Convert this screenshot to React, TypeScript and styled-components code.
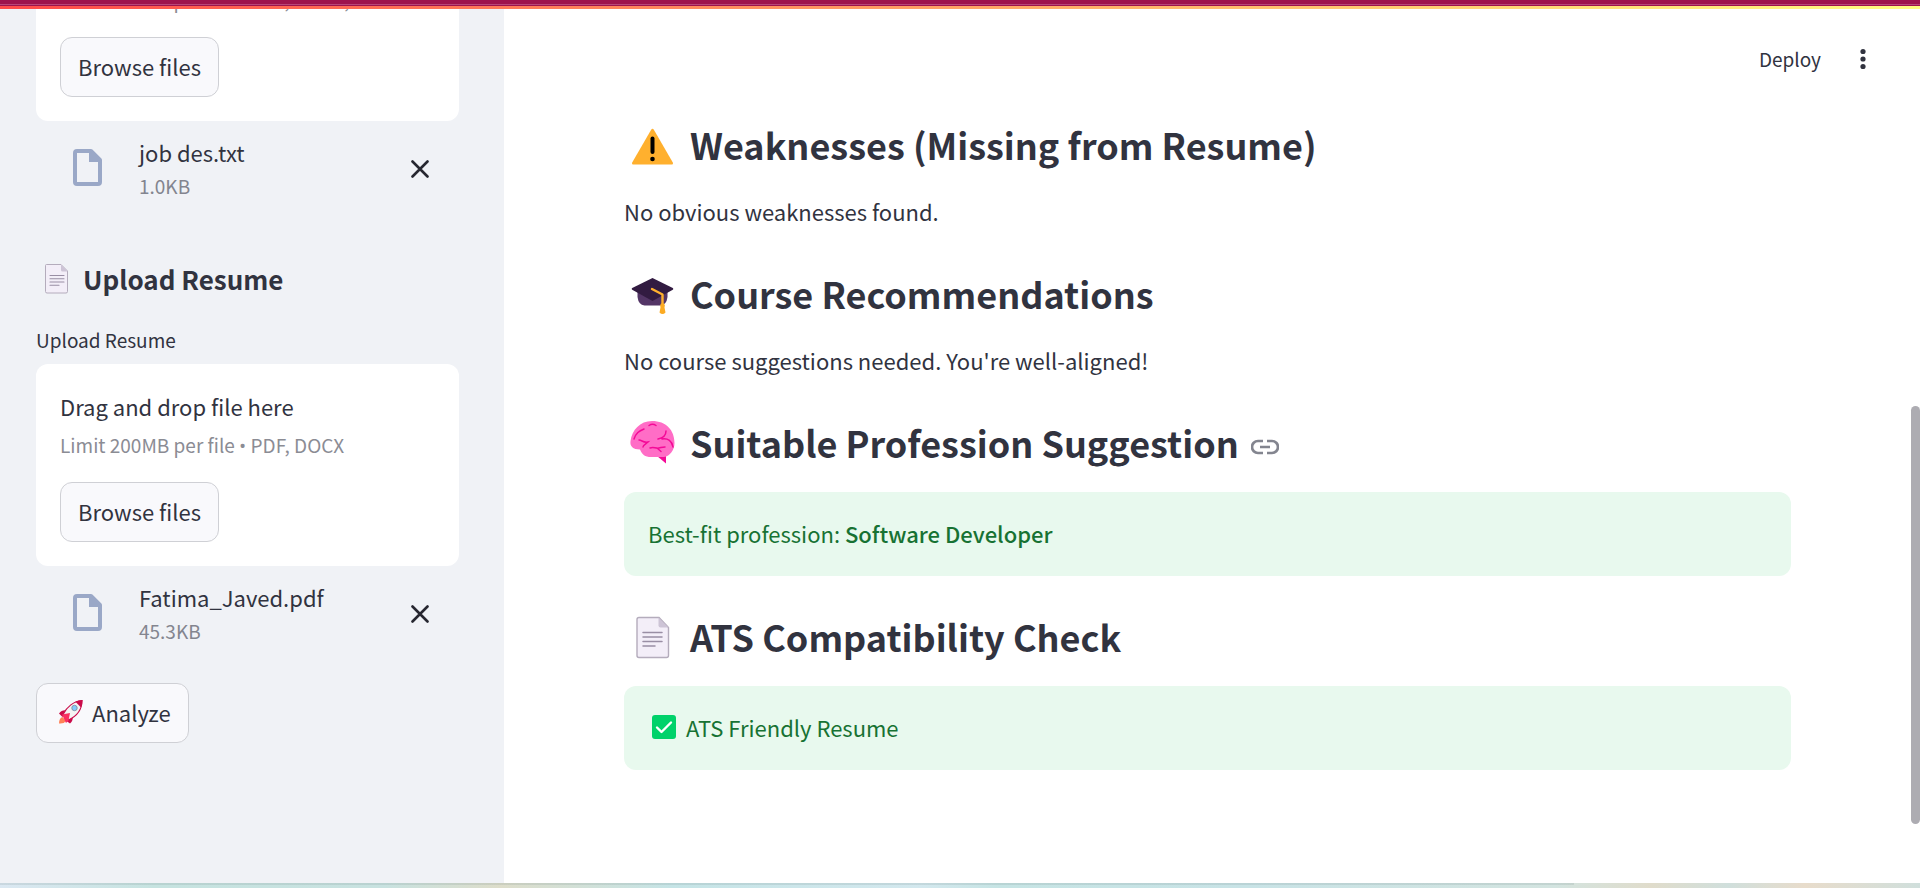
import React, { useId } from 'react';
import styled, { createGlobalStyle } from 'styled-components';

const GlobalStyle = createGlobalStyle`
  *, *::before, *::after { box-sizing: border-box; }
  body {
    margin: 0;
    color: #31333f;
    background: #fff;
    font-family: "Source Sans Pro", "Noto Sans CJK SC", "Noto Sans", sans-serif;
    font-size: 22px;
    line-height: 36px;
  }
  h2, h3, p { margin: 0; }
  button { font: inherit; color: inherit; cursor: pointer; }
`;

const Page = styled.div`
  height: 100vh;
  display: flex;
  flex-direction: column;
  overflow: hidden;
`;

const WindowEdge = styled.div`
  flex: none;
  height: 6px;
  background: linear-gradient(#9e134d 4px, #b7477a 4px, #b7477a 5px, #9e134d 5px);
`;

const Decoration = styled.div`
  flex: none;
  height: 3px;
  background: linear-gradient(90deg, #ff4b4b, #fffd80);
`;

const Desktop = styled.div`
  flex: none;
  height: 5px;
  background:
    linear-gradient(rgba(110, 130, 130, 0.16), rgba(110, 130, 130, 0.16)) 0 0 / 82% 2px no-repeat,
    linear-gradient(90deg, #dbe8f2 0%, #c6e3e0 8%, #c8e2e0 20%, #ddddca 26%, #c5e4e6 35%, #d3e8ee 48%, #c6e4e4 52%, #c8e3e6 65%, #d3e4e0 81%, #e0dccb 86%, #d0dfdc 90%, #e8dccb 94%, #d0dfdc 100%);
`;

const Body = styled.div`
  flex: 1;
  min-height: 0;
  display: flex;
`;

const Sidebar = styled.aside`
  flex: none;
  width: 504px;
  padding: 0 45px 0 36px;
  overflow: hidden;
  background: #f0f2f6;
`;

/* The panel is scrolled down, so the first uploader is cut by the top edge. */
const SidebarContent = styled.div`
  margin-top: -90px;
`;

const Dropzone = styled.section`
  padding: 24px;
  border-radius: 12px;
  background: #fff;
`;

const Hint = styled.p`
  margin: 3px 0 19px;
  font-size: 19px;
  color: #8b8c94;
`;

const Bullet = styled.span`
  font-family: "Open Sans", sans-serif;
  line-height: 1;
`;

const Button = styled.button`
  display: flex;
  align-items: center;
  gap: 8px;
  width: fit-content;
  height: 60px;
  padding: 0 17px 3px;
  border: 1px solid #cfd0d5;
  border-radius: 12px;
  background: #f9f9fc;
`;

const FileRow = styled.div`
  display: flex;
  align-items: center;
  height: 96px;
  padding: 0 30px 0 37px;
`;

const FileGlyph = styled.svg`
  flex: none;
  margin-bottom: 4px;
`;

const FileText = styled.div`
  flex: 1;
  min-width: 0;
  padding-left: 37px;
`;

const FileName = styled.div`
  line-height: 34px;
`;

const FileSize = styled.div`
  line-height: 34px;
  font-size: 19px;
  color: #83858f;
`;

const IconButton = styled.button`
  display: flex;
  padding: 0;
  border: 0;
  background: none;
`;

const SideHeading = styled.h3`
  display: flex;
  align-items: center;
  gap: 11px;
  margin-top: 40px;
  padding-left: 6px;
  font-size: 26px;
  font-weight: 600;
  line-height: 44px;
`;

const Label = styled.label`
  display: block;
  margin: 21px 0 6px;
  font-size: 19px;
  line-height: 36px;
`;

const HiddenFile = styled.input`
  display: none;
`;

const AnalyzeRow = styled.div`
  padding-top: 21px;
`;

const Main = styled.main`
  flex: 1;
  min-width: 0;
  display: flex;
  justify-content: space-between;
`;

const Content = styled.div`
  flex: 1;
  min-width: 0;
  display: flex;
  flex-direction: column;
`;

const Toolbar = styled.header`
  display: flex;
  justify-content: flex-end;
  align-items: center;
  gap: 39px;
  height: 100px;
  padding-right: 45px;
`;

const DeployButton = styled.button`
  padding: 0;
  border: 0;
  background: none;
  font-size: 19px;
`;

const Report = styled.div`
  padding: 0 120px;
`;

const Heading = styled.h2`
  display: flex;
  align-items: center;
  gap: 12px;
  height: 69px;
  font-size: 36px;
  font-weight: 600;
  line-height: 50px;
`;

const AnchorLink = styled.a`
  display: flex;
  padding-top: 10px;
  color: #83858f;
`;

const Paragraph = styled.p`
  padding: 15px 0 29px;
`;

const Alert = styled.div`
  display: flex;
  align-items: center;
  gap: 8px;
  height: 84px;
  margin: 16px 0 25px;
  padding: 0 24px 2px;
  border-radius: 12px;
  background: #e8f9ee;
  color: #177233;
`;

const Profession = styled.strong`
  font-weight: 500;
`;

const Track = styled.div`
  flex: none;
  width: 9px;
  display: flex;
  flex-direction: column;
`;

const Thumb = styled.div`
  flex: none;
  height: 418px;
  margin-top: 397px;
  border-radius: 5px;
  background: #adacb2;
`;

const FileIcon = () => (
  <FileGlyph width="29" height="37" viewBox="0 0 29 37" aria-hidden="true">
    <path d="M4 2H18L27 11V33a2 2 0 0 1-2 2H4a2 2 0 0 1-2-2V4a2 2 0 0 1 2-2Z" fill="none" stroke="#9aa8c7" strokeWidth="4" strokeLinejoin="round" />
    <path d="M16 2h3l9 9v2H16Z" fill="#9aa8c7" />
  </FileGlyph>
);

const CloseIcon = () => (
  <svg width="18" height="18" viewBox="0 0 18 18" aria-hidden="true">
    <path d="M1.5 1.5l15 15M16.5 1.5l-15 15" stroke="#262730" strokeWidth="2.6" strokeLinecap="round" />
  </svg>
);

const PageEmoji = () => (
  <svg width="30" height="32" viewBox="0 0 30 32" aria-hidden="true">
    <path d="M4.5 1.5h14.5L25.5 8v20.500a1.500 1.500 0 0 1-1.500 1.500H5a1.500 1.500 0 0 1-1.500-1.500v-26a1 1 0 0 1 1-1Z" fill="#f3eef8" stroke="#b4acbc" strokeWidth="1" />
    <path d="M19 1.500L25.500 8.500h-5a1.500 1.500 0 0 1-1.500-1.500Z" fill="#cdc4d6" />
    <path d="M8 12.500h14M8 15.800h14M8 19h14M8 22.200h9" stroke="#998ea4" strokeWidth="1.100" strokeLinecap="round" />
  </svg>
);

const WarningEmoji = () => (
  <svg width="54" height="50" viewBox="0 0 54 50" aria-hidden="true">
    <path d="M27 11Q28.500 8.600 30 11L48.800 43.400Q49.500 45.500 47.500 45.500H9.500Q7.500 45.500 8.200 43.400Z" fill="#ffb02e" />
    <path d="M28.500 19.500v13.500" stroke="#000" strokeWidth="4" strokeLinecap="round" />
    <circle cx="28.500" cy="40" r="2.300" fill="#000" />
  </svg>
);

const CapEmoji = () => (
  <svg width="54" height="50" viewBox="0 0 54 50" aria-hidden="true">
    <path d="M13.500 18h30v11q-1 8-7 8.500H20.500q-6-.5-7-8.500Z" fill="#533566" />
    <path d="M28.500 10L48.800 20Q50 21 48.800 21.800L28.500 33 8.200 21.800Q7 21 8.200 20Z" fill="#321b41" />
    <path d="M28 21L38.500 26.500V38" fill="none" stroke="#ffb02e" strokeWidth="2.400" strokeLinecap="round" strokeLinejoin="round" />
    <path d="M37 35.500h3q1.500 1.500.5 4l1 5q-3 3-6 0l1-5q-1-2.500.5-4Z" fill="#fcab23" />
  </svg>
);

const BrainEmoji = () => (
  <svg width="54" height="46" viewBox="0 0 54 46" aria-hidden="true">
    <path d="M33 37l9 7.500V36Z" fill="#f40a97" />
    <path d="M28 2C16 2 8 11 6.500 22c-.8 5.500 2.500 8.500 9.500 8.500 2 5 5 7.500 11 7.500h13c6-1 10.500-7 10.500-14C50.500 11 42 2 28 2Z" fill="#ff6dc6" />
    <path d="M10 20c2-6 5-8 10-10M25 6.500c2-1.500 5-1.500 7 0M42 12c0 4-3 7-8 8M38 20c6-1 10 2 11 8M15 21c3 0 4 3 9 2-2 2-5 3-5 5M26 29c4-2 5 1 9 0 2-.3 3-1 6-1M33 29l4 3.500" fill="none" stroke="#f40a97" strokeWidth="1.500" strokeLinecap="round" />
  </svg>
);

const DocEmoji = () => (
  <svg width="54" height="48" viewBox="0 0 54 48" aria-hidden="true">
    <path d="M15 5.500h20L44.500 15.500v28a2 2 0 0 1-2 2h-27.500a2 2 0 0 1-2-2V7.500a2 2 0 0 1 2-2Z" fill="#f3eef8" stroke="#b4acbc" strokeWidth="1.400" />
    <path d="M34.500 5.500L44.500 15.500h-8a2 2 0 0 1-2-2Z" fill="#cdc4d6" />
    <path d="M19 20.500h19M19 25h19M19 29.500h19M19 34h12" stroke="#998ea4" strokeWidth="1.500" strokeLinecap="round" />
  </svg>
);

const CheckEmoji = () => (
  <svg width="30" height="24" viewBox="0 0 30 24" aria-hidden="true">
    <rect x="4" y="0" width="24" height="24" rx="3" fill="#00d26a" />
    <path d="M9 12.500l4.500 4.500L23 7.500" fill="none" stroke="#fff" strokeWidth="2.400" strokeLinecap="round" strokeLinejoin="round" />
  </svg>
);

const RocketEmoji = () => (
  <svg width="30" height="26" viewBox="0 0 30 26" aria-hidden="true">
    <path d="M8.500 18Q5 19 5 24.500q5 .5 7-2.500Z" fill="#ff8257" />
    <path d="M5 14.500Q8 10.500 13 11.500L8.500 18ZM18.500 17.500q1 4-2.500 7L11 21Z" fill="#ca0b4a" />
    <path d="M28 1.500C20 2 12.500 8 9 15.500l5.500 5.500C22 17.500 28 11 28 1.500Z" fill="#f4f4f4" stroke="#ca0b4a" strokeWidth="1.100" />
    <path d="M21.500 2.800q3-1.500 7-1.800Q28.500 5 27 8.500Z" fill="#ca0b4a" />
    <path d="M8 15.500l8-1.500-1.500 7.500L12 24Z" fill="#f92f60" />
    <circle cx="20.500" cy="9" r="2.700" fill="#83cbff" stroke="#8399a8" strokeWidth="1" />
  </svg>
);

const LinkIcon = () => (
  <svg width="28" height="28" viewBox="0 0 28 28" fill="none" stroke="currentColor" strokeWidth="2.700" aria-hidden="true">
    <path d="M12 8H7a6 6 0 0 0 0 12h5M16 8h5a6 6 0 0 1 0 12h-5M9 14h10" />
  </svg>
);

const DotsIcon = () => (
  <svg width="6" height="22" viewBox="0 0 6 22" fill="#31333f" aria-hidden="true">
    <circle cx="3" cy="3.500" r="2.600" />
    <circle cx="3" cy="11" r="2.600" />
    <circle cx="3" cy="18.500" r="2.600" />
  </svg>
);

const Uploader = ({ id, formats, file, size }: { id: string; formats: string; file: string; size: string }) => (
  <>
    <Dropzone>
      <HiddenFile id={id} type="file" />
      <p>Drag and drop file here</p>
      <Hint>
        Limit 200MB per file <Bullet>•</Bullet> {formats}
      </Hint>
      <Button type="button">Browse files</Button>
    </Dropzone>
    <FileRow>
      <FileIcon />
      <FileText>
        <FileName>{file}</FileName>
        <FileSize>{size}</FileSize>
      </FileText>
      <IconButton type="button" aria-label={`Remove ${file}`}>
        <CloseIcon />
      </IconButton>
    </FileRow>
  </>
);

export default function App() {
  const jobId = useId();
  const resumeId = useId();
  return (
    <Page>
      <GlobalStyle />
      <WindowEdge />
      <Decoration />
      <Body>
        <Sidebar>
          <SidebarContent>
            <Uploader id={jobId} formats="PDF, DOCX, TXT" file="job des.txt" size="1.0KB" />
            <SideHeading>
              <PageEmoji />
              Upload Resume
            </SideHeading>
            <Label htmlFor={resumeId}>Upload Resume</Label>
            <Uploader id={resumeId} formats="PDF, DOCX" file="Fatima_Javed.pdf" size="45.3KB" />
            <AnalyzeRow>
              <Button type="button">
                <RocketEmoji />
                Analyze
              </Button>
            </AnalyzeRow>
          </SidebarContent>
        </Sidebar>
        <Main>
          <Content>
            <Toolbar>
              <DeployButton type="button">Deploy</DeployButton>
              <IconButton type="button" aria-label="Menu">
                <DotsIcon />
              </IconButton>
            </Toolbar>
            <Report>
              <Heading>
                <WarningEmoji />
                Weaknesses (Missing from Resume)
              </Heading>
              <Paragraph>No obvious weaknesses found.</Paragraph>
              <Heading>
                <CapEmoji />
                Course Recommendations
              </Heading>
              <Paragraph>No course suggestions needed. You're well-aligned!</Paragraph>
              <Heading id="suitable-profession">
                <BrainEmoji />
                Suitable Profession Suggestion
                <AnchorLink href="#suitable-profession" aria-label="Link to heading">
                  <LinkIcon />
                </AnchorLink>
              </Heading>
              <Alert>
                <span>
                  Best-fit profession: <Profession>Software Developer</Profession>
                </span>
              </Alert>
              <Heading>
                <DocEmoji />
                ATS Compatibility Check
              </Heading>
              <Alert>
                <CheckEmoji />
                ATS Friendly Resume
              </Alert>
            </Report>
          </Content>
          <Track>
            <Thumb />
          </Track>
        </Main>
      </Body>
      <Desktop />
    </Page>
  );
}
